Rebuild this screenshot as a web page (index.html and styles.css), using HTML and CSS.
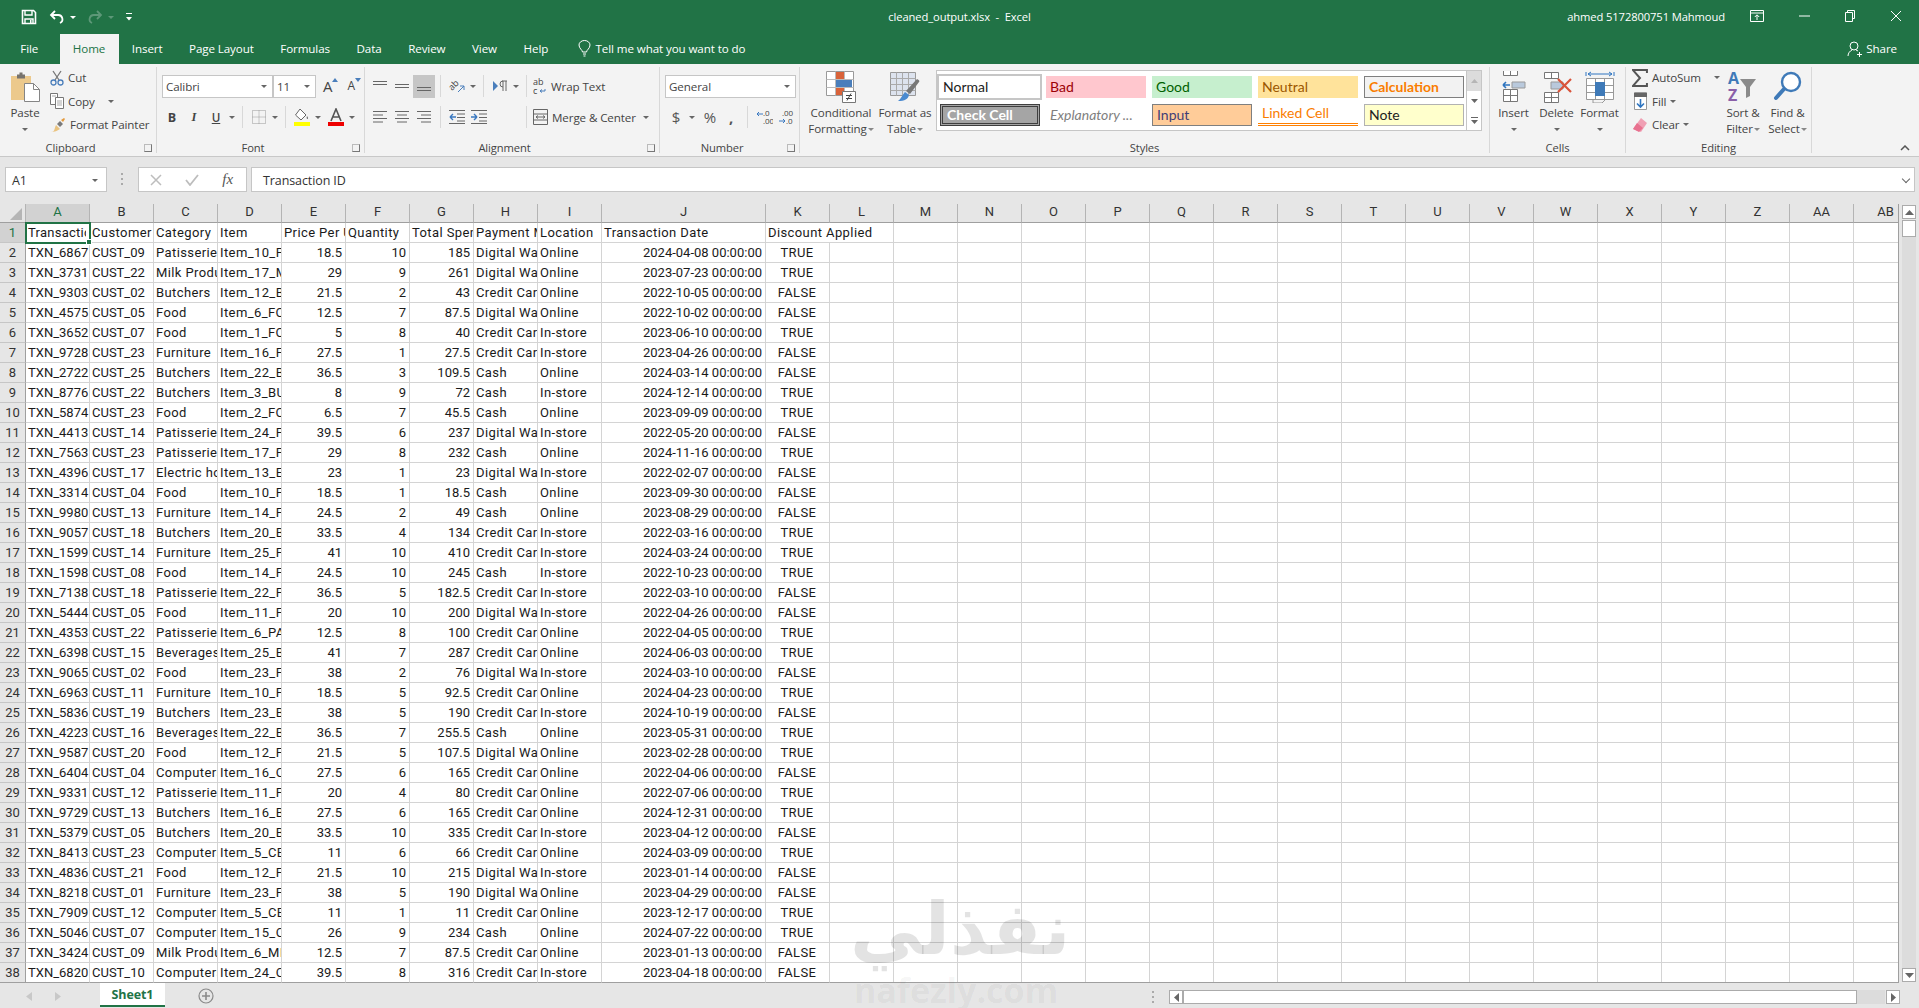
FILE: index.html
```html
<!DOCTYPE html>
<html lang="en">

<head>
    <meta charset="UTF-8">
    <meta name="viewport" content="width=device-width, initial-scale=1.0">
    <title>cleaned_output.xlsx - Excel</title>
    <link rel="stylesheet" href="styles.css">
</head>

<body>
    <header class="titlebar">
        <div class="qat">
            <svg class="qat-save" width="16" height="16" viewBox="0 0 16 16"><path d="M1.5 1.5h11l2 2v11h-13z" fill="none" stroke="#fff" stroke-width="1.6"/><path d="M4 2v4h7V2M4 15v-5h8v5" fill="none" stroke="#fff" stroke-width="1.4"/><path d="M9 11h1.5v3H9z" fill="#fff"/></svg>
            <svg class="qat-undo" width="16" height="16" viewBox="0 0 16 16"><path d="M6 2 2 6l4 4" fill="none" stroke="#fff" stroke-width="1.8"/><path d="M2.5 6H9a4.2 4.2 0 0 1 2 8" fill="none" stroke="#fff" stroke-width="1.8"/></svg>
            <i class="caret caret-white"></i>
            <svg class="qat-redo" width="16" height="16" viewBox="0 0 16 16"><path d="M10 2l4 4-4 4" fill="none" stroke="#5d9878" stroke-width="1.8"/><path d="M13.5 6H7a4.2 4.2 0 0 0-2 8" fill="none" stroke="#5d9878" stroke-width="1.8"/></svg>
            <i class="caret caret-dim"></i>
            <svg class="qat-more" width="8" height="10" viewBox="0 0 8 10"><path d="M1 1.5h6" stroke="#fff"/><path d="M1 5h6L4 8.5z" fill="#fff"/></svg>
        </div>
        <div class="doc-title">cleaned_output.xlsx &nbsp;-&nbsp; Excel</div>
        <div class="winbar">
            <span class="user">ahmed 5172800751 Mahmoud</span>
            <svg class="win-display" width="14" height="12" viewBox="0 0 14 12"><path d="M.5.5h13v11H.5zM.5 3h13" fill="none" stroke="#fff"/><path d="M7 10V5M4.8 7 7 4.8 9.2 7" fill="none" stroke="#fff"/></svg>
            <svg class="win-btn" width="46" height="12" viewBox="0 0 46 12"><path d="M18 6h11" stroke="#fff"/></svg>
            <svg class="win-btn" width="46" height="12" viewBox="0 0 46 12"><path d="M18.500 2.500h7v9h-7zM20.500 2.500V.5h7v8h-2" fill="none" stroke="#fff"/></svg>
            <svg class="win-btn" width="46" height="12" viewBox="0 0 46 12"><path d="M18 1l10 10M28 1 18 11" stroke="#fff"/></svg>
        </div>
    </header>

    <nav class="tabs">
        <a class="tab tab-file">File</a>
        <a class="tab tab-active">Home</a>
        <a class="tab">Insert</a>
        <a class="tab">Page Layout</a>
        <a class="tab">Formulas</a>
        <a class="tab">Data</a>
        <a class="tab">Review</a>
        <a class="tab">View</a>
        <a class="tab">Help</a>
        <span class="tell-me">
            <svg width="13" height="17" viewBox="0 0 13 17"><path d="M4.500 12c0-2-3.500-3.500-3.500-7a5.500 4.500 0 0 1 11 0c0 3.500-3.500 5-3.500 7zM5 14h3M5.500 16h2" fill="none" stroke="#fff"/></svg>
            Tell me what you want to do
        </span>
        <span class="share">
            <svg width="15" height="16" viewBox="0 0 15 16"><circle cx="7" cy="5" r="4" fill="none" stroke="#fff"/><path d="M1 15c0-3 2-5 4-6M9 9l2 1M10 13.500h5M12.500 11v5" fill="none" stroke="#fff"/></svg>
            Share
        </span>
    </nav>

    <section class="ribbon">
        <div class="group group-clipboard">
            <div class="group-body">
                <div class="big big-paste">
                    <div class="big-icon">
                        <svg width="30" height="30" viewBox="0 0 30 30"><path d="M1 4h20v24H1z" fill="#ecc98c"/><path d="M7 2.500h2.500V.5h3v2H15v4H7z" fill="#77736d"/><path d="M14.500 11.500h9l6 6v12h-15z" fill="#fff" stroke="#858585"/><path d="M23.500 11.500v6h6" fill="none" stroke="#858585"/></svg>
                    </div>
                    <span>Paste</span>
                    <span><i class="caret"></i></span>
                </div>
                <div class="small-col">
                    <div class="small-row"><svg width="14" height="16" viewBox="0 0 14 16"><path d="M3 1l6 9M11 1 5 10" stroke="#767676" stroke-width="1.300"/><circle cx="3.500" cy="12.500" r="2.500" fill="none" stroke="#4a7ebb" stroke-width="1.300"/><circle cx="10.500" cy="12.500" r="2.500" fill="none" stroke="#4a7ebb" stroke-width="1.300"/></svg>Cut</div>
                    <div class="small-row"><svg width="14" height="16" viewBox="0 0 14 16"><path d="M.5.500h7v11h-7z" fill="#fff" stroke="#777"/><path d="M5.500 4.500h8v11h-8z" fill="#fff" stroke="#777"/><path d="M7 8h5M7 10h5M7 12h5M2 3h4" stroke="#a9a9a9"/></svg>Copy <i class="caret caret-gap"></i></div>
                    <div class="small-row"><svg width="16" height="16" viewBox="0 0 16 16"><path d="M1 15c4 0 3-3 5-7l4 4c-3 2-5 3-9 3z" fill="#eac37f"/><path d="M7 7l3-3 3 3-3 3z" fill="#7a7a7a"/><path d="M11 3l3-2 1 1-2 3z" fill="#e49a3d"/></svg>Format Painter</div>
                </div>
            </div>
            <div class="group-label group-label-dlg">Clipboard<i class="launcher"></i></div>
        </div>

        <div class="group group-font">
            <div class="group-body rows">
                <div class="row">
                    <div class="combo combo-font">Calibri<i class="caret"></i></div>
                    <div class="combo combo-size">11<i class="caret"></i></div>
                    <div class="grow-a grow-up">A<svg width="6" height="4" viewBox="0 0 6 4"><path d="M0 4l3-4 3 4z" fill="#4a7ebb"/></svg></div>
                    <div class="grow-a grow-down">A<svg width="6" height="4" viewBox="0 0 6 4"><path d="M0 0l3 4 3-4z" fill="#4a7ebb"/></svg></div>
                </div>
                <div class="row">
                    <div class="tb fmt-b">B</div>
                    <div class="tb fmt-i">I</div>
                    <div class="tb fmt-u">U</div>
                    <div class="car"><i class="caret"></i></div>
                    <div class="sep"></div>
                    <div class="tb"><svg width="14" height="14" viewBox="0 0 14 14"><path d="M.5.500h13v13H.5zM7 .5v13M.5 7h13" fill="none" stroke="#999" stroke-dasharray="1 1"/></svg></div>
                    <div class="car"><i class="caret"></i></div>
                    <div class="sep"></div>
                    <div class="tb"><svg width="16" height="18" viewBox="0 0 16 18"><path d="M6 1 1.500 7 7 12l5-5z" fill="#fff" stroke="#666"/><path d="M13 8c1 1.500 1.500 2.500.5 3-1 0-1-1.500-.5-3z" fill="#666"/><path d="M0 14h16v4H0z" fill="#ffff00"/></svg></div>
                    <div class="car"><i class="caret"></i></div>
                    <div class="tb tb-color"><svg width="16" height="18" viewBox="0 0 16 18"><path d="M3 13 8 1l5 12M5 9h6" fill="none" stroke="#555" stroke-width="1.600"/><path d="M0 14h16v4H0z" fill="#e00"/></svg></div>
                    <div class="car"><i class="caret"></i></div>
                </div>
            </div>
            <div class="group-label group-label-dlg">Font<i class="launcher"></i></div>
        </div>

        <div class="group group-align">
            <div class="group-body rows">
                <div class="row">
                    <div class="tb"><svg width="14" height="12" viewBox="0 0 14 12"><path d="M0 1.500h14M0 4.500h14" stroke="#666"/></svg></div>
                    <div class="tb"><svg width="14" height="12" viewBox="0 0 14 12"><path d="M0 4.500h14M0 7.500h14" stroke="#666"/></svg></div>
                    <div class="tb tb-on"><svg width="14" height="12" viewBox="0 0 14 12"><path d="M0 7.500h14M0 10.500h14" stroke="#666"/></svg></div>
                    <div class="sep"></div>
                    <div class="tb"><svg width="17" height="17" viewBox="0 0 17 17"><text class="svg-ab" transform="translate(3 13) rotate(-45)">ab</text><path d="M9 14l6-6M15 8v4M15 8h-4" fill="none" stroke="#4a7ebb"/></svg></div>
                    <div class="car"><i class="caret"></i></div>
                    <div class="sep"></div>
                    <div class="tb"><svg width="15" height="12" viewBox="0 0 15 12"><path d="M0 1v10l5-5z" fill="#4a7ebb"/><path d="M9 1h5M10 1v10M13 1v10M10 1a3 3 0 0 0 0 6" fill="none" stroke="#666"/></svg></div>
                    <div class="car"><i class="caret"></i></div>
                    <div class="sep sep-wrap"></div>
                    <div class="txt-btn"><svg width="14" height="18" viewBox="0 0 14 18"><text class="svg-ab" x="0" y="8">ab</text><text class="svg-ab" x="0" y="17">c</text><path d="M7 14h5v-2M7 14l2-1.500M7 14l2 1.500" fill="none" stroke="#4a7ebb"/></svg>Wrap Text</div>
                </div>
                <div class="row">
                    <div class="tb"><svg width="14" height="12" viewBox="0 0 14 12"><path d="M0 .5h14M0 4h10M0 7.500h14M0 11h10" stroke="#666"/></svg></div>
                    <div class="tb"><svg width="14" height="12" viewBox="0 0 14 12"><path d="M0 .5h14M2 4h10M0 7.500h14M2 11h10" stroke="#666"/></svg></div>
                    <div class="tb"><svg width="14" height="12" viewBox="0 0 14 12"><path d="M0 .5h14M4 4h10M0 7.500h14M4 11h10" stroke="#666"/></svg></div>
                    <div class="sep"></div>
                    <div class="tb"><svg width="16" height="14" viewBox="0 0 16 14"><path d="M0 .5h16M8 4h8M8 7.500h8M8 11h8M0 13.500h16" stroke="#666"/><path d="M1 7h6M1 7l3-3M1 7l3 3" fill="none" stroke="#3a78c0" stroke-width="1.400"/></svg></div>
                    <div class="tb"><svg width="16" height="14" viewBox="0 0 16 14"><path d="M0 .5h16M8 4h8M8 7.500h8M8 11h8M0 13.500h16" stroke="#666"/><path d="M0 7h6M6 7 3 4M6 7l-3 3" fill="none" stroke="#3a78c0" stroke-width="1.400"/></svg></div>
                    <div class="sep sep-merge"></div>
                    <div class="txt-btn"><svg width="15" height="16" viewBox="0 0 15 16"><path d="M.5.500h14v15H.5zM.5 5h14M.5 11h14" fill="none" stroke="#666"/><path d="M3 8h9M3 8l2-1.500M3 8l2 1.500M12 8l-2-1.500M12 8l-2 1.500" fill="none" stroke="#666"/></svg>Merge &amp; Center<i class="caret caret-merge"></i></div>
                </div>
            </div>
            <div class="group-label group-label-dlg">Alignment<i class="launcher"></i></div>
        </div>

        <div class="group group-number">
            <div class="group-body rows">
                <div class="row">
                    <div class="combo combo-number">General<i class="caret"></i></div>
                </div>
                <div class="row">
                    <div class="tb fmt-sym">$</div>
                    <div class="car"><i class="caret"></i></div>
                    <div class="tb fmt-sym fmt-pct">%</div>
                    <div class="tb fmt-sym fmt-comma">,</div>
                    <div class="sep"></div>
                    <div class="tb"><svg width="17" height="15" viewBox="0 0 17 15"><text class="svg-dec" x="7" y="6">.0</text><text class="svg-dec" x="7" y="14">.00</text><path d="M1 4h6M1 4l2-2M1 4l2 2" fill="none" stroke="#3a78c0"/></svg></div>
                    <div class="tb"><svg width="17" height="15" viewBox="0 0 17 15"><text class="svg-dec" x="4" y="6">.00</text><text class="svg-dec" x="8" y="14">.0</text><path d="M1 11h6M7 11l-2-2M7 11l-2 2" fill="none" stroke="#3a78c0"/></svg></div>
                </div>
            </div>
            <div class="group-label group-label-dlg">Number<i class="launcher"></i></div>
        </div>

        <div class="group group-styles">
            <div class="group-body">
                <div class="big big-cond">
                    <div class="big-icon">
                        <svg width="30" height="32" viewBox="0 0 30 32"><path d="M.5.500h27v24H.5z" fill="#fff" stroke="#999"/><path d="M.5 8.500h27M.5 16.500h27M9.500.5v24M18.500.5v24" stroke="#bbb"/><path d="M10 1h8v7h-8z" fill="#d9633a"/><path d="M10 9h16v7H10z" fill="#4a7ebb"/><path d="M10 17h8v7h-8z" fill="#d9633a"/><path d="M16.500 20.500h13v11h-13z" fill="#fff" stroke="#777"/><path d="M20 24.500h6M20 27.500h6M25 22.500l-4 7" fill="none" stroke="#444"/></svg>
                    </div>
                    <span>Conditional</span>
                    <span>Formatting <i class="caret caret-in"></i></span>
                </div>
                <div class="big big-table">
                    <div class="big-icon">
                        <svg width="30" height="32" viewBox="0 0 30 32"><path d="M.5 1.500h25v23H.5z" fill="#dde3ee" stroke="#999"/><path d="M.5 7.500h25M.5 13.500h25M.5 19.500h25M6.500 1.500v23M12.500 1.500v23M18.500 1.500v23" stroke="#aaa"/><path d="M27 8c2 1 3 2 2 3L20 23l-4-3z" fill="#777"/><path d="M15 21l4 3c-1 4-4 6-11 6 3-2 4-6 7-9z" fill="#4a8ad0"/></svg>
                    </div>
                    <span>Format as</span>
                    <span>Table <i class="caret caret-in"></i></span>
                </div>
                <div class="gallery">
                    <div class="gallery-grid">
                        <div class="cs cs-normal">Normal</div>
                        <div class="cs cs-bad">Bad</div>
                        <div class="cs cs-good">Good</div>
                        <div class="cs cs-neutral">Neutral</div>
                        <div class="cs cs-calc">Calculation</div>
                        <div class="cs cs-check">Check Cell</div>
                        <div class="cs cs-expl">Explanatory ...</div>
                        <div class="cs cs-input">Input</div>
                        <div class="cs cs-linked">Linked Cell</div>
                        <div class="cs cs-note">Note</div>
                    </div>
                    <div class="gallery-scroll">
                        <div class="gs-btn gs-up"><svg width="7" height="4" viewBox="0 0 7 4"><path d="M0 4l3.500-4L7 4z" fill="#b5b5b5"/></svg></div>
                        <div class="gs-btn"><svg width="7" height="4" viewBox="0 0 7 4"><path d="M0 0l3.500 4L7 0z" fill="#666"/></svg></div>
                        <div class="gs-btn"><svg width="7" height="7" viewBox="0 0 7 7"><path d="M0 .5h7" stroke="#666"/><path d="M0 3l3.500 4L7 3z" fill="#666"/></svg></div>
                    </div>
                </div>
            </div>
            <div class="group-label">Styles</div>
        </div>

        <div class="group group-cells">
            <div class="group-body">
                <div class="big big-cell">
                    <div class="big-icon">
                        <svg width="28" height="32" viewBox="0 0 28 32"><path d="M3.500 1.500h14v6h-14zM10.500 1.500v6M3.500 21.500h14v12h-14zM3.500 27.500h14M10.500 21.500v12" transform="translate(0 -3)" fill="#fff" stroke="#777"/><path d="M12 11h13v6H12z" fill="#b9c9dc" stroke="#999"/><path d="M10 14H3M3 14l3-3M3 14l3 3" fill="none" stroke="#2f75c0" stroke-width="1.600"/></svg>
                    </div>
                    <span>Insert</span>
                    <span><i class="caret"></i></span>
                </div>
                <div class="big big-cell">
                    <div class="big-icon">
                        <svg width="32" height="32" viewBox="0 0 32 32"><path d="M3.500 1.500h14v6h-14zM10.500 1.500v6M3.500 21.500h14v10h-14zM3.500 26.500h14M10.500 21.500v10" fill="#fff" stroke="#777"/><path d="M10 11h12v7H10z" fill="#b9c9dc" stroke="#999"/><path d="M17 8l13 13M30 8 17 21" stroke="#d9533a" stroke-width="2.200"/></svg>
                    </div>
                    <span>Delete</span>
                    <span><i class="caret"></i></span>
                </div>
                <div class="big big-cell">
                    <div class="big-icon">
                        <svg width="30" height="32" viewBox="0 0 30 32"><path d="M3 3h24M3 3l3-2M3 3l3 2M27 3l-3-2M27 3l-3 2M1 1v4M29 1v4" fill="none" stroke="#2f75c0"/><path d="M1.500 7.500h27v21h-27zM1.500 14.500h27M1.500 21.500h27M10.500 7.500v21M19.500 7.500v21" fill="#fff" stroke="#999"/><path d="M10 11h10v14H10z" fill="#3f7ab8"/><path d="M8 29v3h9l3-3" fill="none" stroke="#999"/></svg>
                    </div>
                    <span>Format</span>
                    <span><i class="caret"></i></span>
                </div>
            </div>
            <div class="group-label">Cells</div>
        </div>

        <div class="group group-editing">
            <div class="group-body">
                <div class="small-col small-edit">
                    <div class="small-row"><svg width="16" height="18" viewBox="0 0 16 18"><path d="M15 4V1H1l7 8-7 8h14v-3" fill="none" stroke="#555" stroke-width="2"/></svg>AutoSum<i class="caret caret-sum"></i></div>
                    <div class="small-row"><svg width="16" height="18" viewBox="0 0 16 18"><path d="M2.500.5h12v17h-12z" fill="#fff" stroke="#999"/><path d="M2 1h13v4H2z" fill="#666"/><path d="M8.500 7v8M5 11.500l3.500 3.500 3.500-3.500" fill="none" stroke="#2f75c0" stroke-width="1.600"/></svg>Fill<i class="caret"></i></div>
                    <div class="small-row"><svg width="16" height="16" viewBox="0 0 16 16"><path d="M9 1l6 5-6 9-8-3z" fill="#f0a0b4"/><path d="M1 12l4-6 6 5-4 4z" fill="#e8718f"/></svg>Clear<i class="caret"></i></div>
                </div>
                <div class="big big-sort">
                    <div class="big-icon">
                        <svg width="32" height="34" viewBox="0 0 32 34"><text class="svg-az svg-a" x="1" y="14">A</text><text class="svg-az svg-z" x="1" y="31">Z</text><path d="M13 9h16l-6 8v9l-4 2V17z" fill="#8a8a8a"/></svg>
                    </div>
                    <span>Sort &amp;</span>
                    <span>Filter <i class="caret caret-in"></i></span>
                </div>
                <div class="big big-find">
                    <div class="big-icon">
                        <svg width="30" height="34" viewBox="0 0 30 34"><circle cx="18" cy="12" r="9" fill="#fff" stroke="#3f7ab8" stroke-width="2.400"/><path d="M11 19 3 28" stroke="#3f7ab8" stroke-width="4" stroke-linecap="round"/></svg>
                    </div>
                    <span>Find &amp;</span>
                    <span>Select <i class="caret caret-in"></i></span>
                </div>
            </div>
            <div class="group-label">Editing</div>
        </div>

        <div class="collapse">
            <svg width="10" height="6" viewBox="0 0 10 6"><path d="M1 5l4-4 4 4" fill="none" stroke="#555" stroke-width="1.500"/></svg>
        </div>
    </section>

    <section class="formula-bar">
        <div class="name-box">A1<i class="caret"></i></div>
        <div class="fx-dots"></div>
        <div class="fx-box">
            <svg width="12" height="12" viewBox="0 0 12 12"><path d="M1 1l10 10M11 1 1 11" stroke="#bdbdbd" stroke-width="1.500"/></svg>
            <svg width="14" height="12" viewBox="0 0 14 12"><path d="M1 6l4 5 8-10" fill="none" stroke="#bdbdbd" stroke-width="1.800"/></svg>
            <span class="fx">fx</span>
        </div>
        <div class="formula-input">Transaction ID<i class="chev"></i></div>
    </section>

    <section class="sheet-area">
        <div class="sheet-wrap">
            <table class="sheet">
                <colgroup>
                    <col class="w-head"><col class="w-std"><col class="w-std"><col class="w-std"><col class="w-std"><col class="w-std"><col class="w-std"><col class="w-std"><col class="w-std"><col class="w-std"><col class="w-date"><col class="w-std"><col class="w-std"><col class="w-std"><col class="w-std"><col class="w-std"><col class="w-std"><col class="w-std"><col class="w-std"><col class="w-std"><col class="w-std"><col class="w-std"><col class="w-std"><col class="w-std"><col class="w-std"><col class="w-std"><col class="w-std"><col class="w-std"><col class="w-std">
                </colgroup>
                <thead>
                    <tr><th class="corner"><i></i></th><th class="col-on">A</th><th>B</th><th>C</th><th>D</th><th>E</th><th>F</th><th>G</th><th>H</th><th>I</th><th>J</th><th>K</th><th>L</th><th>M</th><th>N</th><th>O</th><th>P</th><th>Q</th><th>R</th><th>S</th><th>T</th><th>U</th><th>V</th><th>W</th><th>X</th><th>Y</th><th>Z</th><th>AA</th><th>AB</th></tr>
                </thead>
                <tbody>
                    <tr class="head-row"><th class="row-on">1</th><td class="active"><span>Transaction ID</span><i class="handle"></i></td><td>Customer ID</td><td>Category</td><td>Item</td><td>Price Per Unit</td><td>Quantity</td><td>Total Spent</td><td>Payment Method</td><td>Location</td><td>Transaction Date</td><td colspan="2">Discount Applied</td><td colspan="16" class="rest"></td></tr>
                    <tr><th>2</th><td>TXN_6867</td><td>CUST_09</td><td>Patisserie</td><td>Item_10_PAT</td><td>18.5</td><td>10</td><td>185</td><td>Digital Wallet</td><td>Online</td><td>2024-04-08 00:00:00</td><td>TRUE</td><td colspan="17" class="rest"></td></tr>
                    <tr><th>3</th><td>TXN_3731</td><td>CUST_22</td><td>Milk Products</td><td>Item_17_MILK</td><td>29</td><td>9</td><td>261</td><td>Digital Wallet</td><td>Online</td><td>2023-07-23 00:00:00</td><td>TRUE</td><td colspan="17" class="rest"></td></tr>
                    <tr><th>4</th><td>TXN_9303</td><td>CUST_02</td><td>Butchers</td><td>Item_12_BUT</td><td>21.5</td><td>2</td><td>43</td><td>Credit Card</td><td>Online</td><td>2022-10-05 00:00:00</td><td>FALSE</td><td colspan="17" class="rest"></td></tr>
                    <tr><th>5</th><td>TXN_4575</td><td>CUST_05</td><td>Food</td><td>Item_6_FOOD</td><td>12.5</td><td>7</td><td>87.5</td><td>Digital Wallet</td><td>Online</td><td>2022-10-02 00:00:00</td><td>FALSE</td><td colspan="17" class="rest"></td></tr>
                    <tr><th>6</th><td>TXN_3652</td><td>CUST_07</td><td>Food</td><td>Item_1_FOOD</td><td>5</td><td>8</td><td>40</td><td>Credit Card</td><td>In-store</td><td>2023-06-10 00:00:00</td><td>TRUE</td><td colspan="17" class="rest"></td></tr>
                    <tr><th>7</th><td>TXN_9728</td><td>CUST_23</td><td>Furniture</td><td>Item_16_FUR</td><td>27.5</td><td>1</td><td>27.5</td><td>Credit Card</td><td>In-store</td><td>2023-04-26 00:00:00</td><td>FALSE</td><td colspan="17" class="rest"></td></tr>
                    <tr><th>8</th><td>TXN_2722</td><td>CUST_25</td><td>Butchers</td><td>Item_22_BUT</td><td>36.5</td><td>3</td><td>109.5</td><td>Cash</td><td>Online</td><td>2024-03-14 00:00:00</td><td>FALSE</td><td colspan="17" class="rest"></td></tr>
                    <tr><th>9</th><td>TXN_8776</td><td>CUST_22</td><td>Butchers</td><td>Item_3_BUT</td><td>8</td><td>9</td><td>72</td><td>Cash</td><td>In-store</td><td>2024-12-14 00:00:00</td><td>TRUE</td><td colspan="17" class="rest"></td></tr>
                    <tr><th>10</th><td>TXN_5874</td><td>CUST_23</td><td>Food</td><td>Item_2_FOOD</td><td>6.5</td><td>7</td><td>45.5</td><td>Cash</td><td>Online</td><td>2023-09-09 00:00:00</td><td>TRUE</td><td colspan="17" class="rest"></td></tr>
                    <tr><th>11</th><td>TXN_4413</td><td>CUST_14</td><td>Patisserie</td><td>Item_24_PAT</td><td>39.5</td><td>6</td><td>237</td><td>Digital Wallet</td><td>In-store</td><td>2022-05-20 00:00:00</td><td>FALSE</td><td colspan="17" class="rest"></td></tr>
                    <tr><th>12</th><td>TXN_7563</td><td>CUST_23</td><td>Patisserie</td><td>Item_17_PAT</td><td>29</td><td>8</td><td>232</td><td>Cash</td><td>Online</td><td>2024-11-16 00:00:00</td><td>TRUE</td><td colspan="17" class="rest"></td></tr>
                    <tr><th>13</th><td>TXN_4396</td><td>CUST_17</td><td>Electric household</td><td>Item_13_EHE</td><td>23</td><td>1</td><td>23</td><td>Digital Wallet</td><td>In-store</td><td>2022-02-07 00:00:00</td><td>FALSE</td><td colspan="17" class="rest"></td></tr>
                    <tr><th>14</th><td>TXN_3314</td><td>CUST_04</td><td>Food</td><td>Item_10_FOOD</td><td>18.5</td><td>1</td><td>18.5</td><td>Cash</td><td>Online</td><td>2023-09-30 00:00:00</td><td>FALSE</td><td colspan="17" class="rest"></td></tr>
                    <tr><th>15</th><td>TXN_9980</td><td>CUST_13</td><td>Furniture</td><td>Item_14_FUR</td><td>24.5</td><td>2</td><td>49</td><td>Cash</td><td>Online</td><td>2023-08-29 00:00:00</td><td>FALSE</td><td colspan="17" class="rest"></td></tr>
                    <tr><th>16</th><td>TXN_9057</td><td>CUST_18</td><td>Butchers</td><td>Item_20_BUT</td><td>33.5</td><td>4</td><td>134</td><td>Credit Card</td><td>In-store</td><td>2022-03-16 00:00:00</td><td>TRUE</td><td colspan="17" class="rest"></td></tr>
                    <tr><th>17</th><td>TXN_1599</td><td>CUST_14</td><td>Furniture</td><td>Item_25_FUR</td><td>41</td><td>10</td><td>410</td><td>Credit Card</td><td>In-store</td><td>2024-03-24 00:00:00</td><td>TRUE</td><td colspan="17" class="rest"></td></tr>
                    <tr><th>18</th><td>TXN_1598</td><td>CUST_08</td><td>Food</td><td>Item_14_FOOD</td><td>24.5</td><td>10</td><td>245</td><td>Cash</td><td>In-store</td><td>2022-10-23 00:00:00</td><td>TRUE</td><td colspan="17" class="rest"></td></tr>
                    <tr><th>19</th><td>TXN_7138</td><td>CUST_18</td><td>Patisserie</td><td>Item_22_PAT</td><td>36.5</td><td>5</td><td>182.5</td><td>Credit Card</td><td>In-store</td><td>2022-03-10 00:00:00</td><td>FALSE</td><td colspan="17" class="rest"></td></tr>
                    <tr><th>20</th><td>TXN_5444</td><td>CUST_05</td><td>Food</td><td>Item_11_FOOD</td><td>20</td><td>10</td><td>200</td><td>Digital Wallet</td><td>In-store</td><td>2022-04-26 00:00:00</td><td>FALSE</td><td colspan="17" class="rest"></td></tr>
                    <tr><th>21</th><td>TXN_4353</td><td>CUST_22</td><td>Patisserie</td><td>Item_6_PAT</td><td>12.5</td><td>8</td><td>100</td><td>Credit Card</td><td>Online</td><td>2022-04-05 00:00:00</td><td>TRUE</td><td colspan="17" class="rest"></td></tr>
                    <tr><th>22</th><td>TXN_6398</td><td>CUST_15</td><td>Beverages</td><td>Item_25_BEV</td><td>41</td><td>7</td><td>287</td><td>Credit Card</td><td>Online</td><td>2024-06-03 00:00:00</td><td>TRUE</td><td colspan="17" class="rest"></td></tr>
                    <tr><th>23</th><td>TXN_9065</td><td>CUST_02</td><td>Food</td><td>Item_23_FOOD</td><td>38</td><td>2</td><td>76</td><td>Digital Wallet</td><td>In-store</td><td>2024-03-10 00:00:00</td><td>FALSE</td><td colspan="17" class="rest"></td></tr>
                    <tr><th>24</th><td>TXN_6963</td><td>CUST_11</td><td>Furniture</td><td>Item_10_FUR</td><td>18.5</td><td>5</td><td>92.5</td><td>Credit Card</td><td>Online</td><td>2024-04-23 00:00:00</td><td>TRUE</td><td colspan="17" class="rest"></td></tr>
                    <tr><th>25</th><td>TXN_5836</td><td>CUST_19</td><td>Butchers</td><td>Item_23_BUT</td><td>38</td><td>5</td><td>190</td><td>Credit Card</td><td>In-store</td><td>2024-10-19 00:00:00</td><td>FALSE</td><td colspan="17" class="rest"></td></tr>
                    <tr><th>26</th><td>TXN_4223</td><td>CUST_16</td><td>Beverages</td><td>Item_22_BEV</td><td>36.5</td><td>7</td><td>255.5</td><td>Cash</td><td>Online</td><td>2023-05-31 00:00:00</td><td>TRUE</td><td colspan="17" class="rest"></td></tr>
                    <tr><th>27</th><td>TXN_9587</td><td>CUST_20</td><td>Food</td><td>Item_12_FOOD</td><td>21.5</td><td>5</td><td>107.5</td><td>Digital Wallet</td><td>Online</td><td>2023-02-28 00:00:00</td><td>TRUE</td><td colspan="17" class="rest"></td></tr>
                    <tr><th>28</th><td>TXN_6404</td><td>CUST_04</td><td>Computers</td><td>Item_16_CEA</td><td>27.5</td><td>6</td><td>165</td><td>Credit Card</td><td>Online</td><td>2022-04-06 00:00:00</td><td>FALSE</td><td colspan="17" class="rest"></td></tr>
                    <tr><th>29</th><td>TXN_9331</td><td>CUST_12</td><td>Patisserie</td><td>Item_11_PAT</td><td>20</td><td>4</td><td>80</td><td>Credit Card</td><td>Online</td><td>2022-07-06 00:00:00</td><td>TRUE</td><td colspan="17" class="rest"></td></tr>
                    <tr><th>30</th><td>TXN_9729</td><td>CUST_13</td><td>Butchers</td><td>Item_16_BUT</td><td>27.5</td><td>6</td><td>165</td><td>Credit Card</td><td>Online</td><td>2024-12-31 00:00:00</td><td>TRUE</td><td colspan="17" class="rest"></td></tr>
                    <tr><th>31</th><td>TXN_5379</td><td>CUST_05</td><td>Butchers</td><td>Item_20_BUT</td><td>33.5</td><td>10</td><td>335</td><td>Credit Card</td><td>In-store</td><td>2023-04-12 00:00:00</td><td>FALSE</td><td colspan="17" class="rest"></td></tr>
                    <tr><th>32</th><td>TXN_8413</td><td>CUST_23</td><td>Computers</td><td>Item_5_CEA</td><td>11</td><td>6</td><td>66</td><td>Credit Card</td><td>Online</td><td>2024-03-09 00:00:00</td><td>TRUE</td><td colspan="17" class="rest"></td></tr>
                    <tr><th>33</th><td>TXN_4836</td><td>CUST_21</td><td>Food</td><td>Item_12_FOOD</td><td>21.5</td><td>10</td><td>215</td><td>Digital Wallet</td><td>In-store</td><td>2023-01-14 00:00:00</td><td>FALSE</td><td colspan="17" class="rest"></td></tr>
                    <tr><th>34</th><td>TXN_8218</td><td>CUST_01</td><td>Furniture</td><td>Item_23_FUR</td><td>38</td><td>5</td><td>190</td><td>Digital Wallet</td><td>Online</td><td>2023-04-29 00:00:00</td><td>FALSE</td><td colspan="17" class="rest"></td></tr>
                    <tr><th>35</th><td>TXN_7909</td><td>CUST_12</td><td>Computers</td><td>Item_5_CEA</td><td>11</td><td>1</td><td>11</td><td>Credit Card</td><td>Online</td><td>2023-12-17 00:00:00</td><td>TRUE</td><td colspan="17" class="rest"></td></tr>
                    <tr><th>36</th><td>TXN_5046</td><td>CUST_07</td><td>Computers</td><td>Item_15_CEA</td><td>26</td><td>9</td><td>234</td><td>Cash</td><td>Online</td><td>2024-07-22 00:00:00</td><td>TRUE</td><td colspan="17" class="rest"></td></tr>
                    <tr><th>37</th><td>TXN_3424</td><td>CUST_09</td><td>Milk Products</td><td>Item_6_MILK</td><td>12.5</td><td>7</td><td>87.5</td><td>Credit Card</td><td>Online</td><td>2023-01-13 00:00:00</td><td>FALSE</td><td colspan="17" class="rest"></td></tr>
                    <tr><th>38</th><td>TXN_6820</td><td>CUST_10</td><td>Computers</td><td>Item_24_CEA</td><td>39.5</td><td>8</td><td>316</td><td>Credit Card</td><td>In-store</td><td>2023-04-18 00:00:00</td><td>FALSE</td><td colspan="17" class="rest"></td></tr>
                </tbody>
            </table>
        </div>
        <div class="vscroll">
            <div class="sb-btn"><svg width="9" height="5" viewBox="0 0 9 5"><path d="M0 5l4.500-5L9 5z" fill="#666"/></svg></div>
            <div class="v-thumb"></div>
            <div class="v-track"></div>
            <div class="sb-btn"><svg width="9" height="5" viewBox="0 0 9 5"><path d="M0 0l4.500 5L9 0z" fill="#666"/></svg></div>
        </div>
    </section>

    <footer class="sheet-tabs">
        <div class="nav-arrows">
            <svg width="6" height="9" viewBox="0 0 6 9"><path d="M6 0 0 4.500 6 9z" fill="#c8c8c8"/></svg>
            <svg width="6" height="9" viewBox="0 0 6 9"><path d="M0 0l6 4.500L0 9z" fill="#c8c8c8"/></svg>
        </div>
        <div class="sheet-tab">Sheet1</div>
        <svg class="add-sheet" width="16" height="16" viewBox="0 0 16 16"><circle cx="8" cy="8" r="7" fill="none" stroke="#8a8a8a" stroke-width="1.200"/><path d="M8 4v8M4 8h8" stroke="#8a8a8a" stroke-width="1.600"/></svg>
        <div class="tab-dots"></div>
        <div class="hscroll">
            <div class="sb-btn"><svg width="5" height="9" viewBox="0 0 5 9"><path d="M5 0 0 4.500 5 9z" fill="#666"/></svg></div>
            <div class="h-thumb"></div>
            <div class="h-track"></div>
            <div class="sb-btn"><svg width="5" height="9" viewBox="0 0 5 9"><path d="M0 0l5 4.500L0 9z" fill="#666"/></svg></div>
        </div>
    </footer>

    <div class="watermark">
        <div class="wm-ar">نفذلي</div>
        <div class="wm-en">nafezly.com</div>
    </div>
</body>

</html>
```

FILE: styles.css
```css
* {
    box-sizing: border-box;
}

html,
body {
    margin: 0;
    height: 100%;
}

body {
    position: relative;
    display: flex;
    flex-direction: column;
    height: 1008px;
    overflow: hidden;
    font-family: "Open Sans", "Noto Sans", sans-serif;
    font-size: 11.6px;
    letter-spacing: -0.1px;
    color: #444;
    background: #e6e6e6;
}

i {
    font-style: normal;
}

/* title bar */
.titlebar {
    display: grid;
    grid-template-columns: 1fr auto 1fr;
    align-items: center;
    height: 34px;
    padding-bottom: 2px;
    background: #217346;
    color: #fff;
}

.qat {
    display: flex;
    align-items: center;
    margin-top: 2px;
    padding-left: 21px;
}

.qat-undo {
    margin-left: 12px;
}

.qat-undo + .caret {
    margin-left: 5px;
}

.qat-redo {
    margin-left: 11px;
}

.qat-redo + .caret {
    margin-left: 5px;
}

.qat-more {
    margin-left: 11px;
}

.doc-title {
    font-size: 11.2px;
}

.winbar {
    display: flex;
    align-items: center;
    justify-content: flex-end;
}

.user {
    margin-right: 25px;
    font-size: 11.2px;
}

.win-btn {
    display: block;
}

.win-display + .win-btn {
    margin-left: 17px;
}

/* tabs */
.tabs {
    display: flex;
    align-items: stretch;
    height: 30px;
    padding-left: 7px;
    background: #217346;
    color: #fff;
}

.tab {
    display: flex;
    align-items: center;
    padding: 0 13.3px 1px;
}

.tab-file {
    margin-right: 8px;
}

.tab-active {
    background: #f3f3f3;
    color: #217346;
}

.tell-me {
    display: flex;
    align-items: center;
    gap: 5px;
    margin-left: 16px;
    padding-bottom: 1px;
}

.share {
    display: flex;
    align-items: center;
    gap: 4px;
    margin-left: auto;
    padding: 0 22px 1px 0;
}

/* ribbon */
.ribbon {
    display: flex;
    height: 93px;
    padding-top: 3px;
    border-bottom: 1px solid #c8c8c8;
    background: #f3f3f3;
}

.group {
    position: relative;
    display: flex;
    flex-direction: column;
    height: 86px;
    border-right: 1px solid #d8d8d8;
}

.group-clipboard { width: 157px; }
.group-font { width: 208px; }
.group-align { width: 295px; }
.group-number { width: 140px; }
.group-styles { width: 690px; }
.group-cells { width: 136px; }
.group-editing { width: 186px; }

.group-body {
    display: flex;
    flex: 1;
}

.group-label {
    height: 18px;
    margin-bottom: -4px;
    font-size: 11.2px;
    line-height: 18px;
    text-align: center;
}

/* the dialog launcher takes room on the right of the label */
.group-label-dlg {
    padding-right: 15px;
}

.launcher {
    position: absolute;
    right: 4px;
    bottom: 1px;
    width: 8px;
    height: 8px;
    border-bottom: 1px solid #777;
    border-left: 1px solid #bbb;
    border-right: 1px solid #777;
    border-top: 1px solid #bbb;
}

.caret {
    display: inline-block;
    width: 0;
    height: 0;
    border-left: 3px solid transparent;
    border-right: 3px solid transparent;
    border-top: 3px solid #666;
    vertical-align: middle;
}

.caret-white { border-top-color: #fff; }
.caret-dim { border-top-color: #5d9878; }
.caret-gap { margin-left: 9px; }
.caret-in { margin-left: -2px; border-top-color: #888; }

.big {
    display: flex;
    flex-direction: column;
    align-items: center;
    line-height: 16px;
    white-space: nowrap;
}

.big-icon {
    display: flex;
    align-items: center;
    justify-content: center;
    height: 38px;
    padding-top: 2px;
}

.big-paste { width: 50px; }
.big-cond { width: 58px; margin-left: 12px; }
.big-table { width: 58px; margin-left: 6px; }
.big-cell { width: 43px; }
.big-cell:first-child { margin-left: 2px; }
.big-sort { width: 46px; }
.big-find { width: 43px; }

.small-col {
    display: flex;
    flex-direction: column;
    margin-top: -1px;
}

.small-row {
    display: flex;
    align-items: center;
    gap: 4px;
    height: 23.5px;
    white-space: nowrap;
}

.small-edit {
    width: 94px;
    padding-left: 6px;
}

.caret-sum { margin-left: 9px; }

.rows {
    flex-direction: column;
    gap: 9px;
    padding-top: 8px;
}

.row {
    display: flex;
    align-items: center;
    height: 22px;
}

.group-font .rows { padding-left: 4px; }
.group-align .rows { padding-left: 4px; }
.group-number .rows { padding-left: 5px; }

.combo {
    display: flex;
    align-items: center;
    justify-content: space-between;
    height: 23px;
    padding: 0 5px 0 3px;
    border: 1px solid #c6c6c6;
    background: #fff;
}

.combo-font { width: 111px; margin-left: 1px; }
.combo-size { width: 43px; }
.combo-number { width: 131px; }

.grow-a {
    display: flex;
    align-items: flex-end;
    font-size: 15px;
    line-height: 18px;
}

.grow-a svg { margin-bottom: 13px; }
.grow-up { margin-left: 7px; }
.grow-down { margin-left: 9px; font-size: 12px; }

.tb {
    display: flex;
    align-items: center;
    justify-content: center;
    width: 22px;
    height: 23px;
    flex: none;
}

.tb-on { background: #c6c6c6; }
.tb-color { margin-left: 2px; }

.car {
    display: flex;
    align-items: center;
    justify-content: center;
    width: 10px;
}

.sep {
    width: 1px;
    height: 22px;
    margin: 0 5px;
    background: #d8d8d8;
}

.sep-wrap { margin-right: 6px; }
.sep-merge { margin-left: 36px; margin-right: 6px; }

.fmt-b { font-weight: 700; font-size: 12.5px; }
.fmt-i { font-style: italic; font-weight: 600; font-size: 12.5px; font-family: "Liberation Serif", serif; }
.fmt-u { font-weight: 600; text-decoration: underline; }
.fmt-sym { font-size: 15px; color: #555; }
.fmt-pct { margin-left: 2px; }
.fmt-comma { font-weight: 700; margin-left: -1px; }

.txt-btn {
    display: flex;
    align-items: center;
    gap: 4px;
    white-space: nowrap;
}

.caret-merge { margin-left: 3px; }

.svg-ab { font-size: 9px; font-family: "Open Sans", sans-serif; fill: #444; }
.svg-dec { font-size: 8px; font-family: "Open Sans", sans-serif; fill: #444; }
.svg-az { font-size: 16px; font-weight: 700; font-family: "Open Sans", sans-serif; }
.svg-a { fill: #3f7ab8; }
.svg-z { fill: #8a5fa8; }

/* cell styles gallery */
.gallery {
    display: flex;
    width: 546px;
    height: 61px;
    margin: 3px 0 0 2px;
    border: 1px solid #c6c6c6;
    background: #fff;
}

.gallery-grid {
    display: grid;
    grid-template-columns: 101px repeat(4, 100px);
    grid-auto-rows: 22px;
    gap: 6px;
    padding: 5px 0 0 2px;
}

.cs {
    display: flex;
    align-items: center;
    padding: 0 0 2px 4px;
    font-family: Lato, "Open Sans", sans-serif;
    font-size: 14px;
    letter-spacing: 0;
    color: #222;
    white-space: nowrap;
}

.cs-normal { background: #fff; box-shadow: 0 0 0 2px #c6c6c6; }
.cs-bad { background: #ffc7ce; color: #9c0006; }
.cs-good { background: #c6efce; color: #006100; }
.cs-neutral { background: #ffe39b; color: #9c5700; }
.cs-calc { background: #f2f2f2; color: #fa7d00; font-weight: 700; border: 1px solid #7f7f7f; }
.cs-check { background: #a5a5a5; color: #fff; font-weight: 700; border: 3px double #3f3f3f; margin-left: 1px; }
.cs-expl { color: #7f7f7f; font-style: italic; }
.cs-input { background: #ffcc99; color: #3f3f76; border: 1px solid #7f7f7f; }
.cs-linked { color: #fa7d00; border-bottom: 3px double #ff8001; }
.cs-note { background: #ffffcc; border: 1px solid #b2b2b2; }

.gallery-scroll {
    display: flex;
    flex-direction: column;
    width: 15px;
    margin-left: auto;
    border-left: 1px solid #c6c6c6;
}

.gs-btn {
    display: flex;
    flex: 1;
    align-items: center;
    justify-content: center;
    background: #fff;
}

.gs-up { background: #dcdcdc; }

.collapse {
    display: flex;
    flex: 1;
    align-items: flex-end;
    justify-content: flex-end;
    height: 84px;
    padding-right: 9px;
}

/* formula bar */
.formula-bar {
    display: flex;
    height: 47px;
    padding: 10px 4px 12px 5px;
}

.name-box,
.fx-box,
.formula-input {
    display: flex;
    align-items: center;
    border: 1px solid #c6c6c6;
    background: #fff;
    font-size: 12.5px;
}

.name-box {
    justify-content: space-between;
    width: 102px;
    padding: 1px 8px 0 6px;
    color: #333;
}

.fx-dots {
    width: 2px;
    height: 12px;
    margin: 6px 15px 0 14px;
    background: repeating-linear-gradient(#aaa 0 2px, transparent 2px 5px);
}

.fx-box {
    justify-content: space-between;
    width: 109px;
    padding: 0 13px 0 11px;
}

.fx {
    font-family: "Liberation Serif", serif;
    font-style: italic;
    font-size: 15px;
    color: #555;
}

.formula-input {
    flex: 1;
    justify-content: space-between;
    margin-left: 4px;
    padding: 1px 4px 0 11px;
    color: #333;
}

.chev {
    width: 6px;
    height: 6px;
    margin: -3px 1px 0 0;
    border-right: 1.5px solid #666;
    border-bottom: 1.5px solid #666;
    transform: rotate(45deg);
}

/* sheet */
.sheet-area {
    display: flex;
    height: 779px;
}

.sheet-wrap {
    width: 1899px;
    overflow: hidden;
    border-right: 1px solid #9f9f9f;
    background: #fff;
}

.sheet {
    table-layout: fixed;
    width: 1918px;
    border-collapse: separate;
    border-spacing: 0;
    font-family: Roboto, "Open Sans", sans-serif;
    font-size: 13px;
    letter-spacing: 0;
    color: #1a1a1a;
}

.w-head { width: 26px; }
.w-std { width: 64px; }
.w-date { width: 164px; }

.sheet thead th {
    height: 19px;
    padding: 0 0 2px;
    border-right: 1px solid #b4b4b4;
    border-bottom: 1px solid #9f9f9f;
    background: #e6e6e6;
    font-weight: 400;
    line-height: 16px;
    color: #333;
}

.sheet thead .corner {
    position: relative;
}

.corner i {
    position: absolute;
    right: 3px;
    bottom: 2px;
    width: 12px;
    height: 12px;
    background: #b5b5b5;
    clip-path: polygon(100% 0, 100% 100%, 0 100%);
}

.sheet thead .col-on {
    background: #d2d2d2;
    border-bottom: 1px solid #217346;
    color: #217346;
}

.sheet tbody th {
    height: 20px;
    padding: 1px 0 0;
    border-right: 1px solid #9f9f9f;
    border-bottom: 1px solid #c6c6c6;
    background: #e6e6e6;
    font-weight: 400;
    line-height: 18px;
    color: #333;
}

.sheet tbody .row-on {
    background: #d2d2d2;
    color: #217346;
}

.sheet td {
    height: 20px;
    padding: 1px 3px 0 2px;
    overflow: hidden;
    border-right: 1px solid #d4d4d4;
    border-bottom: 1px solid #d4d4d4;
    letter-spacing: 0.4px;
    line-height: 18px;
    white-space: nowrap;
}

/* id, customer and number columns run tighter */
.sheet td:nth-child(2),
.sheet td:nth-child(3),
.sheet td:nth-child(6),
.sheet td:nth-child(7),
.sheet td:nth-child(8),
.sheet td:nth-child(11) {
    letter-spacing: 0;
}

.sheet td:nth-child(6),
.sheet td:nth-child(7),
.sheet td:nth-child(8),
.sheet td:nth-child(11) {
    text-align: right;
}

.sheet td:nth-child(12) {
    text-align: center;
}

.sheet .head-row td {
    letter-spacing: 0.4px;
    text-align: left;
}

.sheet .head-row td.active {
    letter-spacing: 0.25px;
}

.sheet td.rest {
    padding: 0;
    border-right: 0;
    background-image: repeating-linear-gradient(to right, transparent 0 63px, #d4d4d4 63px 64px);
}

.sheet tbody tr:last-child th,
.sheet tbody tr:last-child td {
    border-bottom-color: #9f9f9f;
}

.sheet td.active {
    position: relative;
    overflow: visible;
    outline: 2px solid #217346;
    outline-offset: -1px;
}

.active span {
    display: block;
    overflow: hidden;
}

.handle {
    position: absolute;
    right: -3px;
    bottom: -3px;
    width: 6px;
    height: 6px;
    border: 1px solid #fff;
    background: #217346;
}

.vscroll {
    display: flex;
    flex-direction: column;
    width: 20px;
    padding: 1px 3px;
}

.sb-btn {
    display: flex;
    align-items: center;
    justify-content: center;
    flex: none;
    width: 14px;
    height: 14px;
    border: 1px solid #ababab;
    background: #fff;
}

.v-thumb {
    height: 17px;
    margin-top: 1px;
    border: 1px solid #ababab;
    background: #fff;
}

.v-track {
    flex: 1;
    background: #dcdcdc;
}

/* bottom strip */
.sheet-tabs {
    display: flex;
    align-items: flex-start;
    height: 25px;
}

.nav-arrows {
    display: flex;
    gap: 23px;
    width: 100px;
    padding: 9px 0 0 26px;
}

.sheet-tab {
    width: 65px;
    height: 24px;
    border-bottom: 2px solid #217346;
    background: #fff;
    color: #217346;
    font-weight: 700;
    font-size: 12.5px;
    line-height: 23px;
    text-align: center;
}

.add-sheet {
    margin: 5px 0 0 33px;
}

.tab-dots {
    width: 2px;
    height: 12px;
    margin: 8px 0 0 938px;
    background: repeating-linear-gradient(#aaa 0 2px, transparent 2px 5px);
}

.hscroll {
    display: flex;
    width: 731px;
    margin: 7px 0 0 15px;
}

.h-thumb {
    flex: 1;
    height: 14px;
    border: 1px solid #ababab;
    background: #fff;
}

.h-track {
    width: 28px;
    height: 14px;
    margin-right: 1px;
    background: #dcdcdc;
}

/* watermark sits over the grid */
.watermark {
    position: absolute;
    left: 850px;
    top: 885px;
    width: 212px;
    color: rgba(0, 0, 0, 0.11);
    text-align: center;
    pointer-events: none;
}

.wm-ar {
    font-family: "DejaVu Sans", sans-serif;
    font-size: 72px;
    font-weight: 700;
    line-height: 88px;
}

.wm-en {
    font-family: "Open Sans", sans-serif;
    font-size: 34px;
    font-weight: 700;
    line-height: 34px;
    letter-spacing: 0;
    color: rgba(0, 0, 0, 0.05);
}
```
